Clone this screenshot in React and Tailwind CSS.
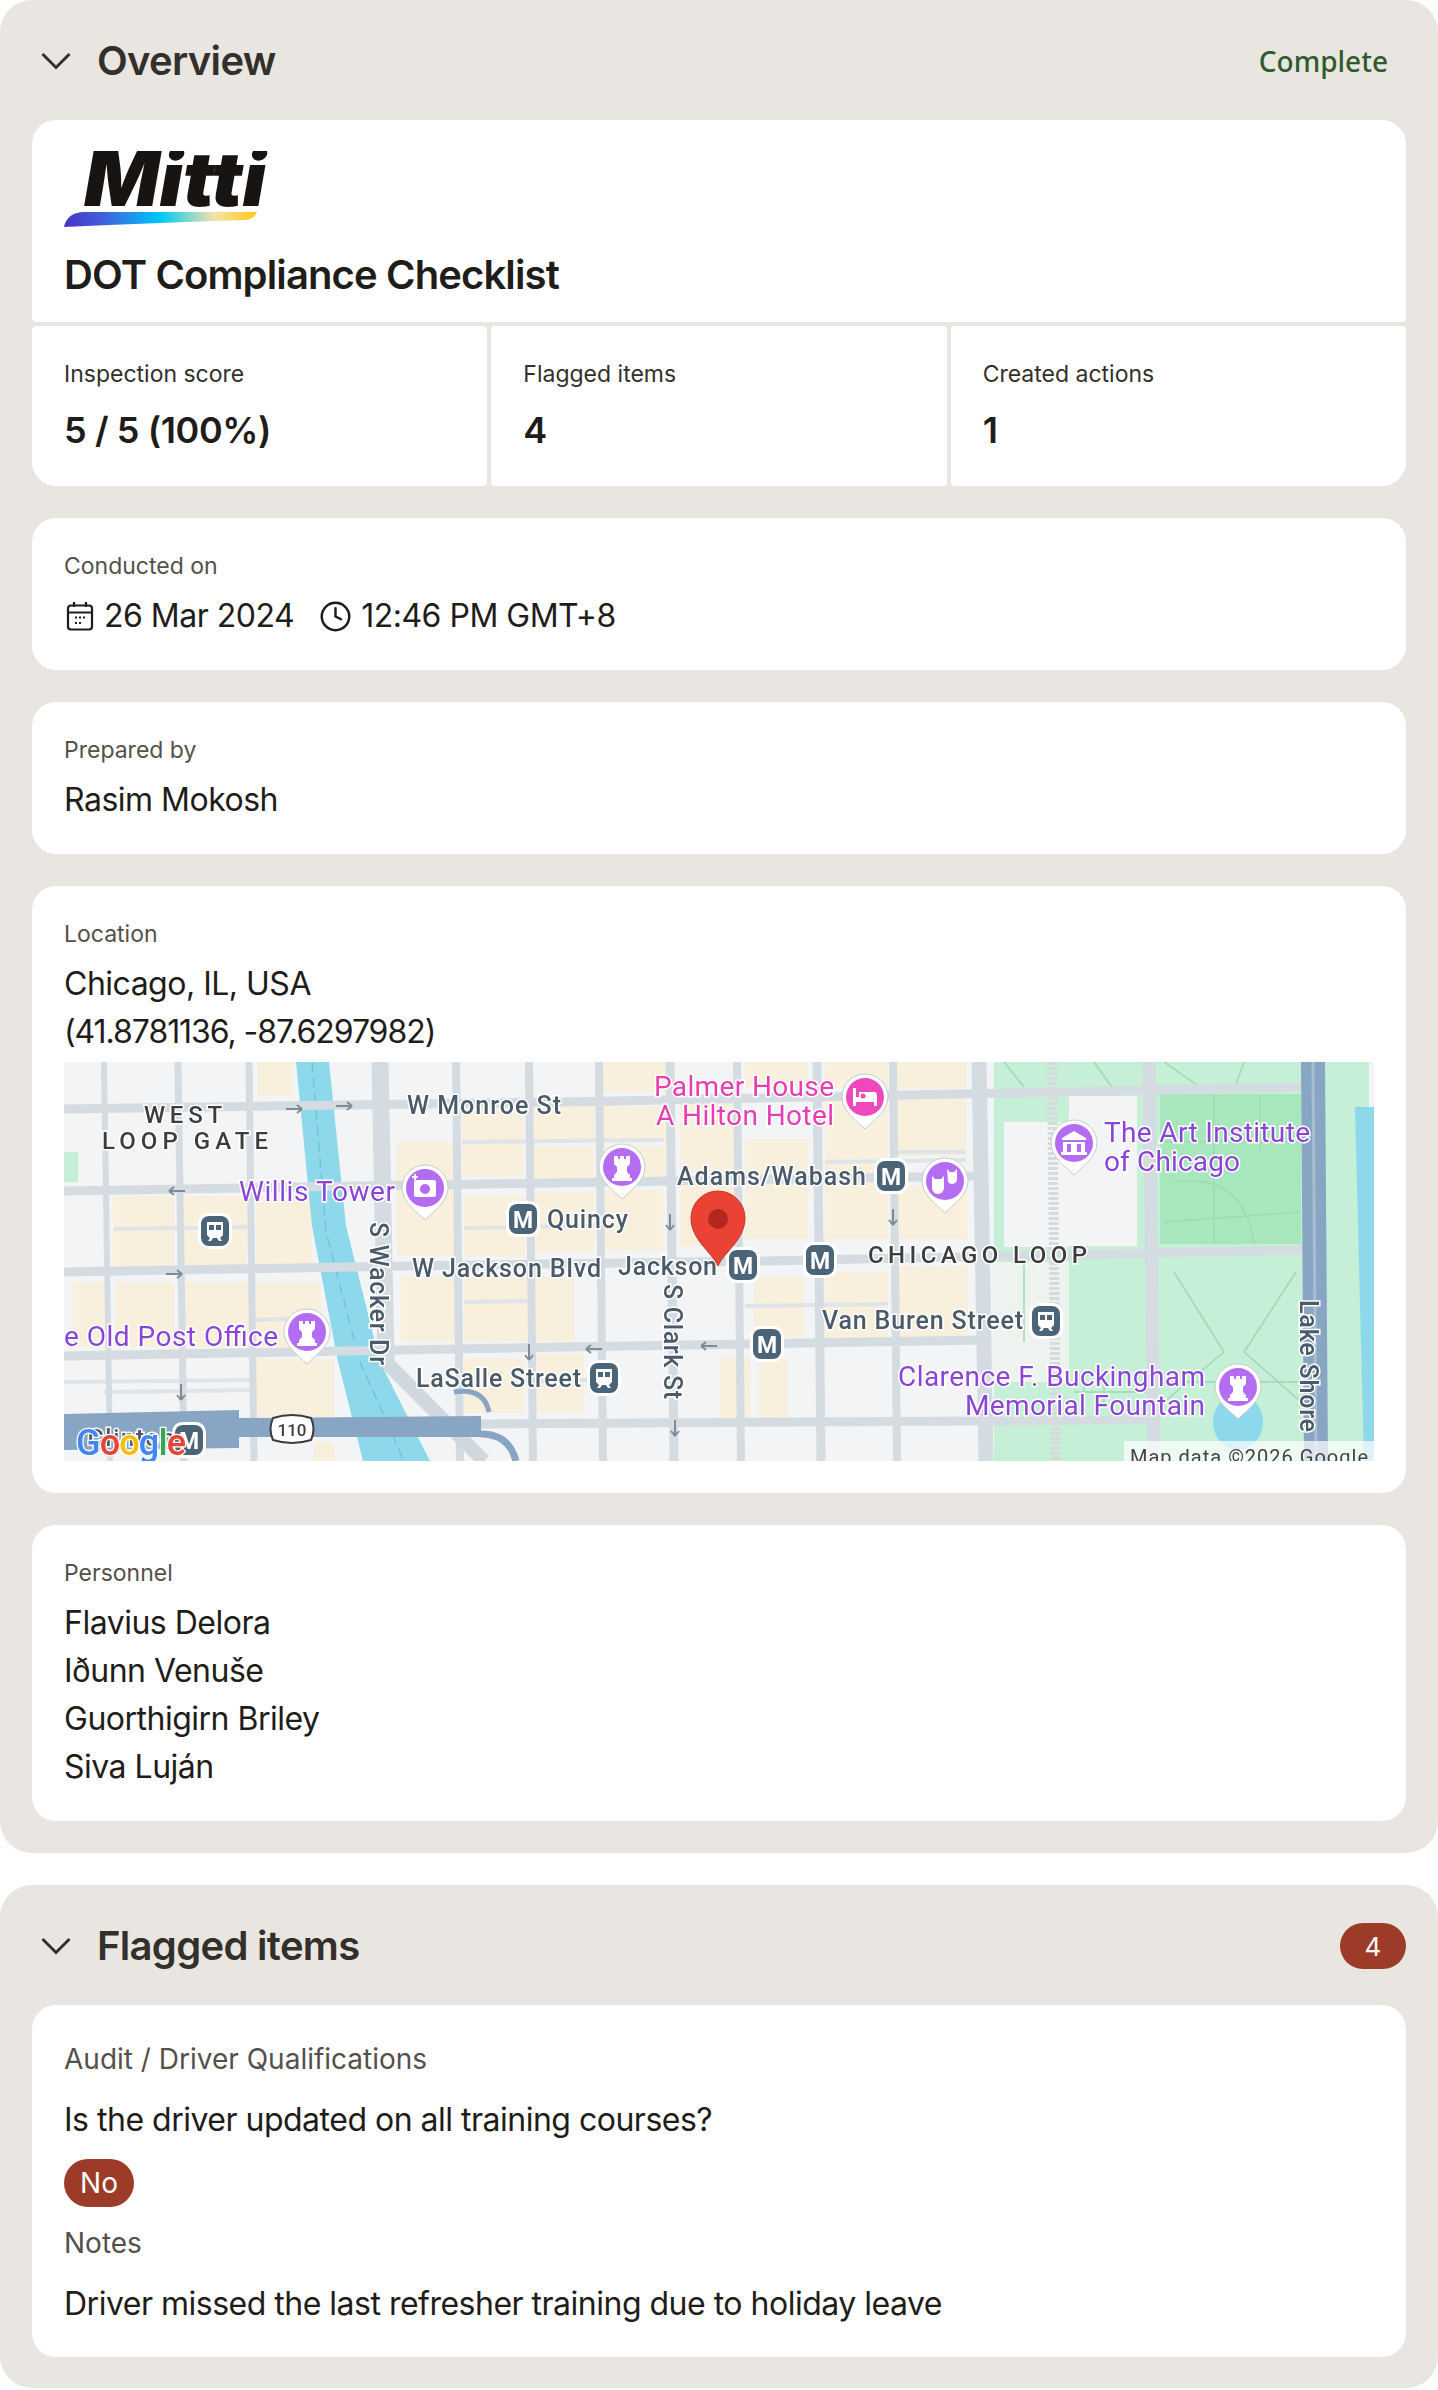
import { Clock } from 'lucide-react';

const FONT = 'font-["Inter","Liberation_Sans",sans-serif]';

const tanBlocks = [
  [194, 0, 34, 34], [398, 44, 61, 71], [470, 44, 60, 34], [470, 84, 60, 34], [539, 0, 63, 30], [539, 44, 63, 36], [539, 84, 63, 34],
  [49, 134, 61, 71], [120, 134, 63, 71], [192, 134, 56, 70], [333, 80, 59, 114], [400, 134, 61, 61], [470, 130, 60, 60], [539, 128, 60, 60],
  [9, 220, 31, 65], [51, 220, 59, 65], [120, 220, 65, 65], [192, 220, 65, 65], [337, 215, 55, 65], [400, 215, 63, 65], [470, 215, 40, 65],
  [192, 297, 78, 58], [400, 296, 60, 55], [470, 292, 50, 58], [250, 380, 20, 19], [681, 0, 63, 26], [761, 0, 63, 26],
  [833, 0, 69, 27], [833, 35, 69, 59], [681, 77, 63, 100], [761, 37, 63, 140], [833, 124, 70, 53], [616, 40, 55, 70], [616, 124, 55, 60],
  [761, 210, 63, 70], [833, 204, 71, 73], [690, 215, 50, 60], [656, 296, 30, 60], [695, 296, 28, 60],
];

const horizontalRoads = [
  'M0 47 L500 40 L1240 25',
  'M0 129 L420 122 L920 114',
  'M0 210 L340 204 L700 199 L1240 188',
  'M0 294 L560 284 L920 278',
  'M417 362 L1090 358',
];

// thin service streets between the main grid
const minorRoads = [
  'M398 80 L600 78', 'M50 167 L183 165', 'M400 166 L530 164', 'M192 258 L257 256', 'M400 240 L463 239', 'M40 330 L190 328',
  'M761 100 L902 98', 'M830 90 L902 90', 'M681 244 L824 242', 'M0 320 L190 318', 'M458 320 L530 318',
];

const verticalRoads = [
  ['M40 0 L46 399', 6], ['M114 0 L120 399', 7], ['M185 0 L190 399', 7], ['M316 0 L322 300', 17], ['M392 0 L396 399', 8],
  ['M465 0 L469 399', 8], ['M535 0 L539 399', 8], ['M606 0 L610 399', 9], ['M673 0 L677 399', 8], ['M753 0 L757 399', 9],
  ['M829 0 L833 399', 8], ['M915 0 L922 399', 15], ['M1085 0 L1090 399', 13],
];

const parkLines = [
  'M1096 80 L1237 80', 'M1150 32 L1150 182', 'M1196 32 L1196 90', 'M1110 120 Q1180 110 1190 182', 'M1100 160 L1237 150',
  'M1110 210 L1160 290', 'M1232 210 L1180 290', 'M1160 290 L1100 340', 'M1180 290 L1237 340', 'M1096 320 L1237 320',
  'M940 30 L1000 30', 'M1010 330 L1090 330', 'M1020 315 L1020 345', 'M1040 315 L1040 345', 'M960 200 L960 280',
  'M1100 0 L1140 28', 'M1180 0 L1170 28', 'M940 0 L960 25', 'M1030 0 L1050 28',
];

function Label({ x, y, w, t, fill = '#4a5a68', size = 25, anchor = 'start', weight = 500 }) {
  return (
    <text
      x={x}
      y={y}
      dominantBaseline="central"
      textAnchor={anchor}
      textLength={w}
      fontFamily="Roboto, sans-serif"
      fontSize={size}
      fontWeight={weight}
      fill={fill}
      stroke="#ffffff"
      strokeWidth="3"
      paintOrder="stroke"
    >
      {t}
    </text>
  );
}

function VLabel({ x, y, w, t }) {
  return (
    <g transform={`rotate(90 ${x} ${y})`}>
      <Label x={x} y={y} w={w} t={t} />
    </g>
  );
}

function Pin({ x, y, color = '#b46cf2', children }) {
  return (
    <g transform={`translate(${x} ${y})`}>
      <path d="M-23 0 A23 23 0 1 1 23 0 C23 14 8 24 0 32 C-8 24 -23 14 -23 0Z" fill="#ffffff" stroke="#c9ccd0" strokeWidth="1" />
      <circle r="19" fill={color} />
      {children}
    </g>
  );
}

function Rook() {
  return (
    <path
      fill="#ffffff"
      d="M-8 -11 h4 v3 h2 v-3 h4 v3 h2 v-3 h4 v8 l-3 3 v5 l3 3 v3 h2 v3 h-20 v-3 h2 v-3 l3 -3 v-5 l-3 -3z"
    />
  );
}

function Metro({ x, y }) {
  return (
    <g>
      <rect x={x - 17} y={y - 18} width="34" height="36" rx="10" fill="#ffffff" />
      <rect x={x - 14} y={y - 15} width="28" height="30" rx="8" fill="#4b6478" />
      <text x={x} y={y + 1} textAnchor="middle" dominantBaseline="central" fontFamily="Roboto, sans-serif" fontSize="23" fontWeight="700" fill="#ffffff">M</text>
    </g>
  );
}

function Transit({ x, y }) {
  return (
    <g transform={`translate(${x} ${y})`}>
      <rect x="-17" y="-18" width="34" height="36" rx="10" fill="#ffffff" />
      <rect x="-14" y="-15" width="28" height="30" rx="8" fill="#4b6478" />
      <path fill="#ffffff" d="M-8 -9 h16 v13 l-3 3 l2 3 h-3 l-2 -3 h-4 l-2 3 h-3 l2 -3 l-3 -3z" />
      <rect x="-6" y="-6" width="5" height="5" fill="#4b6478" />
      <rect x="1" y="-6" width="5" height="5" fill="#4b6478" />
    </g>
  );
}

function MapPicture() {
  return (
    <svg viewBox="0 0 1310 399" className="block w-full h-[399px] blur-[0.6px]">
      <defs>
        <clipPath id="map-clip"><rect width="1310" height="399" /></clipPath>
      </defs>
      <g clipPath="url(#map-clip)">
        <rect width="1310" height="399" fill="#f3f4f5" />
        {tanBlocks.map(([x, y, w, h]) => (
          <rect key={`${x}-${y}`} x={x} y={y} width={w} height={h} fill="#f8efdd" />
        ))}
        <rect x="0" y="90" width="14" height="30" fill="#c6efd8" />

        {/* park */}
        <rect x="930" y="0" width="375" height="399" fill="#c5efd6" />
        <rect x="1005" y="34" width="68" height="150" fill="#f3f4f5" />
        <rect x="940" y="60" width="65" height="125" fill="#f3f4f5" />
        <rect x="930" y="200" width="75" height="120" fill="#eef3f0" />
        <rect x="1096" y="32" width="141" height="150" fill="#a8e7bd" />
        {parkLines.map((d) => (
          <path key={d} d={d} fill="none" stroke="#9ed9b4" strokeWidth="1.5" />
        ))}

        {/* water */}
        <path d="M232 0 H265 L282 164 L316 300 L366 399 H299 L274 300 L248 164Z" fill="#8ed8ec" />
        <path d="M248 0 L262 170 L296 300 L340 399" fill="none" stroke="#6cc4de" strokeWidth="1.5" strokeDasharray="10 6" />
        <path d="M1291 45 H1310 V399 H1300Z" fill="#8ed8ec" />
        <ellipse cx="1174" cy="360" rx="25" ry="28" fill="#8ed8ec" />

        {/* roads */}
        {minorRoads.map((d) => (
          <path key={d} d={d} fill="none" stroke="#dfe4e8" strokeWidth="4" />
        ))}
        {horizontalRoads.map((d) => (
          <path key={d} d={d} fill="none" stroke="#d4dce2" strokeWidth="9" />
        ))}
        {verticalRoads.map(([d, w]) => (
          <path key={d} d={d} fill="none" stroke="#d4dce2" strokeWidth={w} />
        ))}
        <path d="M322 300 L420 399" fill="none" stroke="#cfd8df" strokeWidth="14" />
        <path d="M988 0 L992 399" fill="none" stroke="#d6dadd" strokeWidth="10" strokeDasharray="3 2" />
        <path d="M0 352 L175 348 V356 L417 354 V375 L175 375 L175 386 L0 388Z" fill="#88a6c4" />
        <path d="M417 372 Q445 372 452 399" fill="none" stroke="#88a6c4" strokeWidth="7" />
        <path d="M390 330 Q420 325 425 350" fill="none" stroke="#88a6c4" strokeWidth="5" />
        <path d="M1249 0 L1252 399" fill="none" stroke="#88a6c4" strokeWidth="24" />
        <path d="M1249 0 L1252 399" fill="none" stroke="#a9bdd2" strokeWidth="3" />

        {/* one way arrows */}
        {[[230, 47, 1], [280, 44, 1], [113, 129, -1], [110, 212, 1], [530, 287, -1], [645, 284, -1]].map(([x, y, dir]) => (
          <path key={`${x}-${y}`} d={`M${x - 8} ${y} H${x + 8} M${x + 8 * dir} ${y} l${-5 * dir} -4 M${x + 8 * dir} ${y} l${-5 * dir} 4`} fill="none" stroke="#7e8b96" strokeWidth="2" />
        ))}
        {[[606, 160], [829, 155], [465, 290], [117, 330], [611, 366]].map(([x, y]) => (
          <path key={`${x}-${y}`} d={`M${x} ${y - 8} V${y + 8} M${x} ${y + 8} l-4 -5 M${x} ${y + 8} l4 -5`} fill="none" stroke="#7e8b96" strokeWidth="2" />
        ))}

        {/* labels */}
        <Label x={119} y={53} w={78} t="WEST" anchor="middle" fill="#3d3d3d" size={24} />
        <Label x={121} y={79} w={166} t="LOOP GATE" anchor="middle" fill="#3d3d3d" size={24} />
        <Label x={343} y={43} w={154} t="W Monroe St" />
        <Label x={175} y={129} w={156} t="Willis Tower" fill="#8a45d6" size={28} weight={400} />
        <Label x={0} y={274} w={214} t="e Old Post Office" fill="#8a45d6" size={28} weight={400} />
        <Label x={483} y={157} w={81} t="Quincy" />
        <Label x={348} y={206} w={189} t="W Jackson Blvd" />
        <Label x={554} y={204} w={99} t="Jackson" />
        <Label x={613} y={114} w={189} t="Adams/Wabash" />
        <Label x={804} y={193} w={219} t="CHICAGO LOOP" fill="#3d3d3d" size={24} />
        <Label x={758} y={258} w={201} t="Van Buren Street" />
        <Label x={352} y={316} w={165} t="LaSalle Street" />
        <Label x={590} y={24} w={180} t="Palmer House" fill="#e63db2" size={28} weight={400} />
        <Label x={592} y={53} w={178} t="A Hilton Hotel" fill="#e63db2" size={28} weight={400} />
        <Label x={1040} y={70} w={206} t="The Art Institute" fill="#8a45d6" size={28} weight={400} />
        <Label x={1040} y={99} w={136} t="of Chicago" fill="#8a45d6" size={28} weight={400} />
        <Label x={834} y={314} w={307} t="Clarence F. Buckingham" fill="#8a45d6" size={28} weight={400} />
        <Label x={901} y={343} w={240} t="Memorial Fountain" fill="#8a45d6" size={28} weight={400} />
        <VLabel x={314} y={160} w={143} t="S Wacker Dr" />
        <VLabel x={608} y={222} w={115} t="S Clark St" />
        <VLabel x={1244} y={238} w={132} t="Lake Shore" />

        {/* pins */}
        <Pin x={361} y={126}>
          <rect x="-11" y="-8" width="22" height="17" rx="2" fill="#ffffff" />
          <circle cy="1" r="5" fill="#b46cf2" />
          <path d="M-13 -11 h6 M-10 -14 v6" stroke="#ffffff" strokeWidth="2" />
        </Pin>
        <Pin x={558} y={105}><Rook /></Pin>
        <Pin x={243} y={270}><Rook /></Pin>
        <Pin x={1174} y={325}><Rook /></Pin>
        <Pin x={801} y={35} color="#ef48bd">
          <path d="M-12 -9 h3 v9 h3 v-5 h14 a3 3 0 0 1 4 3 v11 h-3 v-4 h-18 v4 h-3z" fill="#ffffff" />
          <circle cx="-2" cy="-1" r="2.5" fill="#ef48bd" />
        </Pin>
        <Pin x={1010} y={81}>
          <path d="M0 -12 L12 -5 V-3 H-12 V-5Z M-11 -1 H11 V9 H13 V12 H-13 V9 H-11Z" fill="#ffffff" />
          <rect x="-7" y="1" width="4" height="8" fill="#b46cf2" />
          <rect x="3" y="1" width="4" height="8" fill="#b46cf2" />
        </Pin>
        <Pin x={881} y={119}>
          <path d="M-13 -5 l3 3 h6 l3 -3 v12 a6 6 0 0 1 -12 0z" fill="#ffffff" />
          <path d="M2 -12 l3 3 h4 l3 -3 v10 a5 5 0 0 1 -9 3z" fill="#ffffff" />
        </Pin>

        <Label x={24} y={376} w={86} t="Clinton" size={24} />
        <Metro x={459} y={157} />
        <Metro x={827} y={114} />
        <Metro x={679} y={203} />
        <Metro x={756} y={198} />
        <Metro x={703} y={282} />
        <Metro x={125} y={378} />
        <Transit x={151} y={169} />
        <Transit x={982} y={259} />
        <Transit x={540} y={316} />

        {/* highway shield */}
        <path d="M209 356 Q228 350 247 356 Q252 367 247 378 Q228 384 209 378 Q204 367 209 356Z" fill="#ffffff" stroke="#3d3d3d" strokeWidth="2" />
        <text x={228} y={368} textAnchor="middle" dominantBaseline="central" fontFamily="Roboto, sans-serif" fontSize="17" fontWeight="500" fill="#3d3d3d">110</text>

        {/* red marker */}
        <path d="M654 204 C648 190 627 178 627 156 A27 27 0 1 1 681 156 C681 178 660 190 654 204Z" fill="#ea4335" stroke="#c5352a" strokeWidth="1" />
        <circle cx="654" cy="157" r="10" fill="#b3271e" />

        {/* google mark */}
        <text x={12} y={381} dominantBaseline="central" fontFamily="Roboto, sans-serif" fontSize="36" fontWeight="500" stroke="#ffffff" strokeWidth="2.5" paintOrder="stroke" textLength="110">
          <tspan fill="#4285f4">G</tspan><tspan fill="#ea4335">o</tspan><tspan fill="#fbbc05">o</tspan><tspan fill="#4285f4">g</tspan><tspan fill="#34a853">l</tspan><tspan fill="#ea4335">e</tspan>
        </text>

        {/* attribution */}
        <rect x="1060" y="379" width="250" height="20" fill="#ffffff" fillOpacity="0.7" />
        <text x={1066} y={395} dominantBaseline="central" fontFamily="Roboto, sans-serif" fontSize="20" fill="#444444" textLength="238">Map data ©2026 Google</text>
      </g>
    </svg>
  );
}

function MittiLogo() {
  return (
    <svg viewBox="0 0 210 80" className="block w-[210px] h-[80px]">
      <defs>
        <linearGradient id="mitti-swoosh" x1="0" x2="1" y1="0" y2="0">
          <stop offset="0" stopColor="#4a33c9" />
          <stop offset="0.2" stopColor="#3f5fdc" />
          <stop offset="0.5" stopColor="#00c8f7" />
          <stop offset="0.78" stopColor="#f6e3a6" />
          <stop offset="1" stopColor="#ffc914" />
        </linearGradient>
      </defs>
      <text
        x="20"
        y="55"
        fontFamily="Inter, sans-serif"
        fontSize="76"
        fontWeight="900"
        fontStyle="italic"
        fill="#171412"
        textLength="182"
        lengthAdjust="spacingAndGlyphs"
      >
        Mitti
      </text>
      <path d="M0 76 C2 66 10 61 20 61 H193 C191 66 187 68 182 69 C120 71 60 73 0 76Z" fill="url(#mitti-swoosh)" />
    </svg>
  );
}

function CalendarIcon() {
  return (
    <svg width="28" height="30" viewBox="0 0 28 30" fill="none" stroke="#1f1d1a" strokeWidth="2.2" className="shrink-0">
      <rect x="2" y="4.5" width="24" height="24" rx="3" />
      <path d="M2 11.5 H26 M8 1 V6 M20 1 V6" />
      <path d="M9 16.5 h2 M13 16.5 h2 M17 16.5 h2 M9 22 h2 M13 22 h2" strokeWidth="2" />
    </svg>
  );
}

function Chevron() {
  return (
    <svg width="30" height="18" viewBox="0 0 30 18" fill="none" stroke="#33302c" strokeWidth="3" className="shrink-0">
      <path d="M1.5 2 L15 15.5 L28.5 2" />
    </svg>
  );
}

function SectionHeader({ title, children }) {
  return (
    <div className="flex h-[120px] items-center pt-[2px]">
      <div className="ml-[9px]"><Chevron /></div>
      <h2 className="ml-[26px] text-[40px] font-semibold leading-[48px] tracking-[-0.7px] text-[#33302c]">{title}</h2>
      <div className="ml-auto">{children}</div>
    </div>
  );
}

function Field({ label, children, after }) {
  return (
    <div className="rounded-3xl bg-white p-8">
      <div className="mb-2 text-[23px] leading-8 text-[#54504b]">{label}</div>
      <div className="-mb-[2px] pt-[2px] text-[32px] leading-[48px] tracking-[-0.5px] text-[#1f1d1a]">{children}</div>
      {after}
    </div>
  );
}

function Stat({ label, value, className }) {
  return (
    <div className={`flex-1 bg-white p-8 ${className}`}>
      <div className="mb-4 text-[23px] leading-8 text-[#33302c]">{label}</div>
      <div className="text-[36px] font-semibold leading-[48px] tracking-[-0.4px] text-[#1f1d1a]">{value}</div>
    </div>
  );
}

export default function App() {
  return (
    <div className={`w-[1438px] bg-white ${FONT}`}>
      {/* Overview */}
      <section className="rounded-[32px] bg-[#e9e6e1] px-8 pb-8">
        <SectionHeader title="Overview">
          <span className='mr-[18px] font-["Noto_Sans",sans-serif] text-[28px] font-medium text-[#2f5a2b]'>Complete</span>
        </SectionHeader>

        <div className="flex flex-col gap-8">
          <div className="flex flex-col gap-1">
            <div className="h-[202px] rounded-t-3xl rounded-b-[4px] bg-white px-8 pt-8">
              <div className="-mt-[1px]"><MittiLogo /></div>
              <h1 className="mt-[20px] text-[40px] font-semibold leading-[48px] tracking-[-0.87px] text-[#1f1d1a]">DOT Compliance Checklist</h1>
            </div>
            <div className="flex gap-1">
              <Stat label="Inspection score" value="5 / 5 (100%)" className="rounded-t-[4px] rounded-br-[4px] rounded-bl-3xl" />
              <Stat label="Flagged items" value="4" className="rounded-[4px]" />
              <Stat label="Created actions" value="1" className="rounded-t-[4px] rounded-bl-[4px] rounded-br-3xl" />
            </div>
          </div>

          <Field label="Conducted on">
            <div className="flex items-center">
              <div className="ml-[2px]"><CalendarIcon /></div>
              <span className="ml-[10px]">26 Mar 2024</span>
              <Clock size={33} strokeWidth={1.8} className="ml-[25px] shrink-0" />
              <span className="ml-[9px]">12:46 PM GMT+8</span>
            </div>
          </Field>

          <Field label="Prepared by">Rasim Mokosh</Field>

          <Field label="Location" after={<div className="mt-2"><MapPicture /></div>}>
            <div>Chicago, IL, USA</div>
            <div className="tracking-[-1.05px]">(41.8781136, -87.6297982)</div>
          </Field>

          <Field label="Personnel">
            <div>Flavius Delora</div>
            <div>Iðunn Venuše</div>
            <div>Guorthigirn Briley</div>
            <div>Siva Luján</div>
          </Field>
        </div>
      </section>

      {/* Flagged items */}
      <section className="mt-8 rounded-[32px] bg-[#e9e6e1] px-8 pb-[31px]">
        <SectionHeader title="Flagged items">
          <span className="flex h-[46px] w-[66px] items-center justify-center rounded-full bg-[#9c3b27] text-[26px] text-white">4</span>
        </SectionHeader>

        <div className="rounded-3xl bg-white px-8 pt-[38px] pb-[29px]">
          <div className="text-[28px] leading-8 text-[#54504b]">Audit / Driver Qualifications</div>
          <div className="mt-[21px] text-[32px] leading-[48px] tracking-[-0.5px] text-[#1f1d1a]">Is the driver updated on all training courses?</div>
          <span className="mt-[15px] flex h-12 w-[70px] items-center justify-center rounded-full bg-[#9c3b27] text-[28px] text-white">No</span>
          <div className="mt-5 text-[28px] leading-8 text-[#54504b]">Notes</div>
          <div className="mt-[21px] text-[32px] leading-[48px] tracking-[-0.5px] text-[#1f1d1a]">Driver missed the last refresher training due to holiday leave</div>
        </div>
      </section>
    </div>
  );
}
